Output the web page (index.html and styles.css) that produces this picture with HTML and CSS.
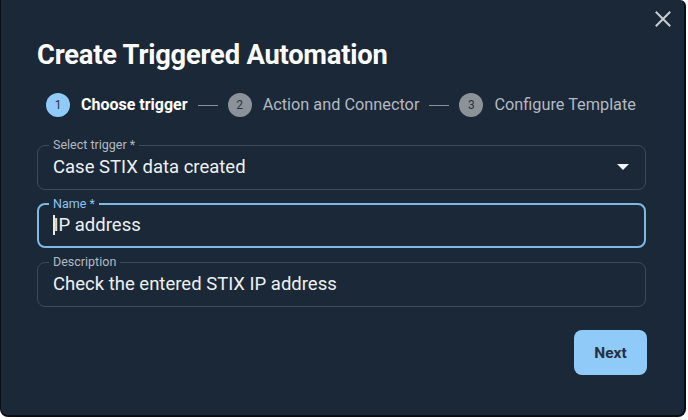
FILE: index.html
```html
<!DOCTYPE html>
<html lang="en">
<head>
<meta charset="utf-8">
<title>Create Triggered Automation</title>
<link rel="stylesheet" href="styles.css">
</head>
<body>
<div class="dialog">
  <div class="top-row">
    <button class="close" aria-label="Close">
      <svg width="16" height="16" viewBox="0 0 16 16"><path d="M1.5 1.5 L14.5 14.5 M14.5 1.5 L1.5 14.5" stroke="#c9cdd2" stroke-width="2" stroke-linecap="square"/></svg>
    </button>
  </div>
  <h1 class="title">Create Triggered Automation</h1>
  <div class="stepper">
    <div class="step active"><span class="dot">1</span><span class="step-label">Choose trigger</span></div>
    <span class="connector"></span>
    <div class="step"><span class="dot">2</span><span class="step-label">Action and Connector</span></div>
    <span class="connector"></span>
    <div class="step"><span class="dot">3</span><span class="step-label">Configure Template</span></div>
  </div>
  <fieldset class="field select">
    <legend>Select trigger *</legend>
    <div class="value-row">
      <span class="value">Case STIX data created</span>
      <svg class="caret" width="12" height="6" viewBox="0 0 12 6"><path d="M0 0 H12 L6 6 Z" fill="#f2f4f6"/></svg>
    </div>
  </fieldset>
  <fieldset class="field focused">
    <legend>Name *</legend>
    <div class="value-row"><span class="cursor"></span><span class="value">IP address</span></div>
  </fieldset>
  <fieldset class="field">
    <legend>Description</legend>
    <div class="value-row"><span class="value">Check the entered STIX IP address</span></div>
  </fieldset>
  <div class="actions">
    <button class="next">Next</button>
  </div>
</div>
</body>
</html>
```

FILE: styles.css
```css
html, body {
  margin: 0;
  padding: 0;
  background: #ffffff;
}

body {
  width: 688px;
  height: 420px;
  font-family: Roboto, "Noto Sans", sans-serif;
}

.dialog {
  box-sizing: border-box;
  width: 686px;
  height: 417px;
  background: #1b2838;
  border-left: 1px solid #0a0f15;
  border-right: 2px solid #0a0f15;
  border-bottom: 2px solid #0a0f15;
  border-radius: 0 6px 8px 8px;
  padding: 11px 38px 0 36px;
  display: flex;
  flex-direction: column;
}

.top-row {
  display: flex;
  justify-content: flex-end;
  margin-right: -25px;
  height: 16px;
}

.close {
  background: none;
  border: 0;
  padding: 0;
  width: 16px;
  height: 16px;
  display: block;
}

.close svg { display: block; }

.title {
  margin: 11px 0 0 0;
  font-size: 27.3px;
  line-height: 34px;
  font-weight: 700;
  color: #ffffff;
  letter-spacing: -0.2px;
}

.stepper {
  margin-top: 21px;
  display: flex;
  align-items: center;
  gap: 10px;
  padding-left: 9px;
}

.step {
  display: flex;
  align-items: center;
  gap: 11px;
}

.dot {
  width: 24px;
  height: 24px;
  border-radius: 50%;
  background: #8c929a;
  color: #2a3442;
  font-size: 12px;
  display: flex;
  align-items: center;
  justify-content: center;
}

.step.active .dot {
  background: #90caf9;
}

.step-label {
  font-size: 16.3px;
  color: #b3b9c0;
  line-height: 20px;
}

.step.active .step-label {
  color: #ffffff;
  font-weight: 700;
  font-size: 16px;
}

.connector {
  width: 20px;
  height: 1px;
  background: #8c929a;
}

.field {
  box-sizing: border-box;
  margin: 21px 0 0 0;
  border: 1px solid #3d4a5a;
  border-radius: 8px;
  padding: 3px 15px 10px 15px;
  min-width: 0;
}

.field + .field { margin-top: 7px; }

.field legend {
  font-size: 12.5px;
  line-height: 14px;
  color: #b3b9c0;
  padding: 0 4px;
  margin-left: -4px;
}

.field.focused {
  border: 2px solid #7db8e6;
  padding: 2px 14px 9px 14px;
}

.field.focused legend { color: #8cc4f2; }

.value-row {
  display: flex;
  align-items: center;
  height: 24px;
}

.value {
  flex: 1;
  font-size: 18.5px;
  line-height: 24px;
  color: #eef1f4;
}

.cursor {
  width: 1.5px;
  height: 20px;
  background: #e6e9ec;
  margin-right: -1px;
}

.caret {
  margin-right: 1px;
}

.actions {
  display: flex;
  justify-content: flex-end;
  margin-top: 23px;
  margin-right: -1px;
}

.next {
  width: 73px;
  height: 45px;
  border: 0;
  border-radius: 8px;
  background: #90caf9;
  color: #25313f;
  font-family: Roboto, "Noto Sans", sans-serif;
  font-size: 15.5px;
  font-weight: 700;
}
```
